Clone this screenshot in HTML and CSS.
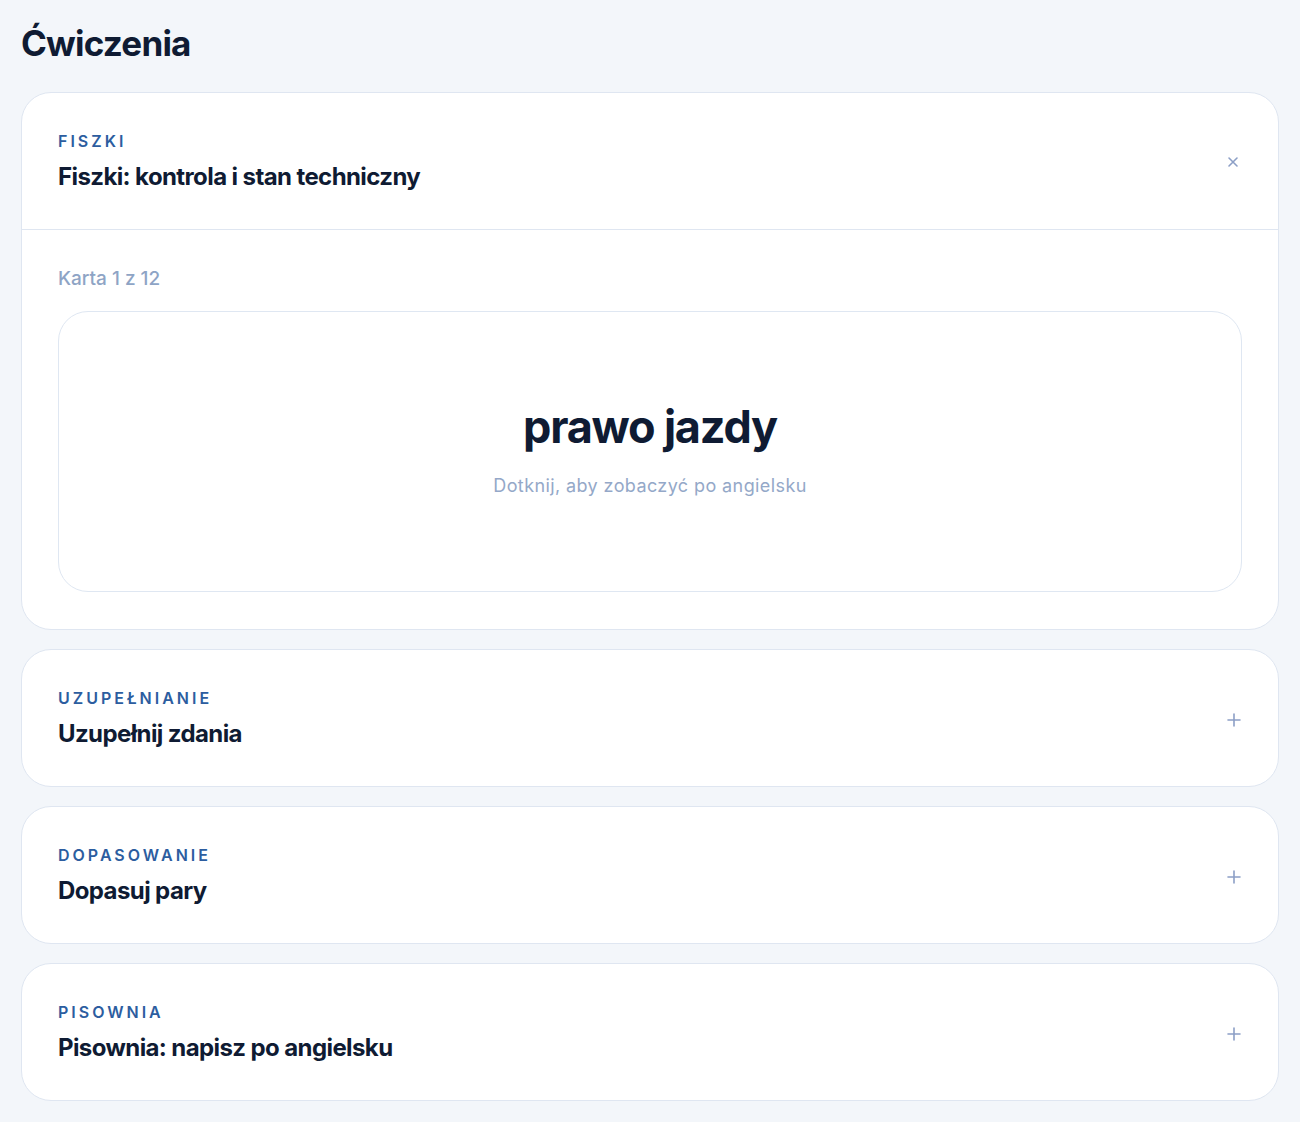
FILE: index.html
```html
<!DOCTYPE html>
<html>
  <head>
    <meta charset="utf-8">
    <title>Ćwiczenia</title>
    <link rel="stylesheet" href="styles.css">
  </head>
  <body>
    <h1 class="page-title">Ćwiczenia</h1>

    <div class="exercises">
      <!-- otwarte ćwiczenie: fiszki -->
      <section class="exercise open">
        <div class="exercise-head">
          <div>
            <div class="kind">Fiszki</div>
            <h2 class="exercise-title">Fiszki: kontrola i stan techniczny</h2>
          </div>
          <button class="toggle close" type="button" aria-label="Zamknij">
            <svg width="12" height="12" viewBox="0 0 12 12"><path d="M2 2L10 10M10 2L2 10" stroke="currentColor" stroke-width="1.6" stroke-linecap="round"/></svg>
          </button>
        </div>
        <div class="exercise-body">
          <div class="counter">Karta 1 z 12</div>
          <div class="flashcard">
            <div class="word">prawo jazdy</div>
            <div class="hint">Dotknij, aby zobaczyć po angielsku</div>
          </div>
        </div>
      </section>

      <section class="exercise">
        <div class="exercise-head">
          <div>
            <div class="kind">Uzupełnianie</div>
            <h2 class="exercise-title">Uzupełnij zdania</h2>
          </div>
          <button class="toggle" type="button" aria-label="Otwórz">
            <svg width="14" height="14" viewBox="0 0 14 14"><path d="M7 1V13M1 7H13" stroke="currentColor" stroke-width="1.6" stroke-linecap="round"/></svg>
          </button>
        </div>
      </section>

      <section class="exercise">
        <div class="exercise-head">
          <div>
            <div class="kind">Dopasowanie</div>
            <h2 class="exercise-title">Dopasuj pary</h2>
          </div>
          <button class="toggle" type="button" aria-label="Otwórz">
            <svg width="14" height="14" viewBox="0 0 14 14"><path d="M7 1V13M1 7H13" stroke="currentColor" stroke-width="1.6" stroke-linecap="round"/></svg>
          </button>
        </div>
      </section>

      <section class="exercise">
        <div class="exercise-head">
          <div>
            <div class="kind">Pisownia</div>
            <h2 class="exercise-title">Pisownia: napisz po angielsku</h2>
          </div>
          <button class="toggle" type="button" aria-label="Otwórz">
            <svg width="14" height="14" viewBox="0 0 14 14"><path d="M7 1V13M1 7H13" stroke="currentColor" stroke-width="1.6" stroke-linecap="round"/></svg>
          </button>
        </div>
      </section>
    </div>
  </body>
</html>
```

FILE: styles.css
```css
body {
  margin: 0;
  padding: 22px 21px 20px;
  background-color: #f3f6fa;
  font-family: Inter, "Noto Sans", sans-serif;
  color: #0f1b33;
}

.page-title {
  margin: 0 0 28px;
  font-size: 35px;
  line-height: 42px;
  font-weight: 700;
  letter-spacing: -0.8px;
}

.exercises {
  display: flex;
  flex-direction: column;
  gap: 19px;
}

.exercise {
  background-color: #fff;
  border: 1px solid #dfe6f1;
  border-radius: 30px;
}

.exercise-head {
  display: flex;
  align-items: center;
  justify-content: space-between;
  padding: 37px 36px 35px;
}

.exercise.open .exercise-head {
  border-bottom: 1px solid #dfe6f1;
}

.kind {
  font-size: 16px;
  line-height: 22px;
  font-weight: 600;
  letter-spacing: 3px;
  text-transform: uppercase;
  color: #2c5d9f;
}

.exercise-title {
  margin: 8px 0 0;
  font-size: 24px;
  line-height: 34px;
  font-weight: 700;
  letter-spacing: -0.6px;
}

.toggle {
  display: flex;
  padding: 0;
  margin: 2px 1px 0 0;
  border: none;
  background: none;
  color: #8c9fc6;
  cursor: pointer;
}

.toggle.close {
  margin: 0 3px 0 0;
}

.exercise-body {
  padding: 35px 36px 37px;
}

.counter {
  font-size: 19px;
  line-height: 28px;
  font-weight: 500;
  color: #8ea4c5;
  margin-bottom: 18px;
}

.flashcard {
  box-sizing: border-box;
  height: 281px;
  padding-bottom: 6px;
  border: 1px solid #dfe7f2;
  border-radius: 30px;
  display: flex;
  flex-direction: column;
  align-items: center;
  justify-content: center;
  cursor: pointer;
}

.word {
  font-size: 45px;
  line-height: 54px;
  font-weight: 700;
  letter-spacing: -1.2px;
}

.hint {
  margin-top: 20px;
  font-size: 18px;
  line-height: 24px;
  letter-spacing: 0.4px;
  color: #94a8c8;
}
```
